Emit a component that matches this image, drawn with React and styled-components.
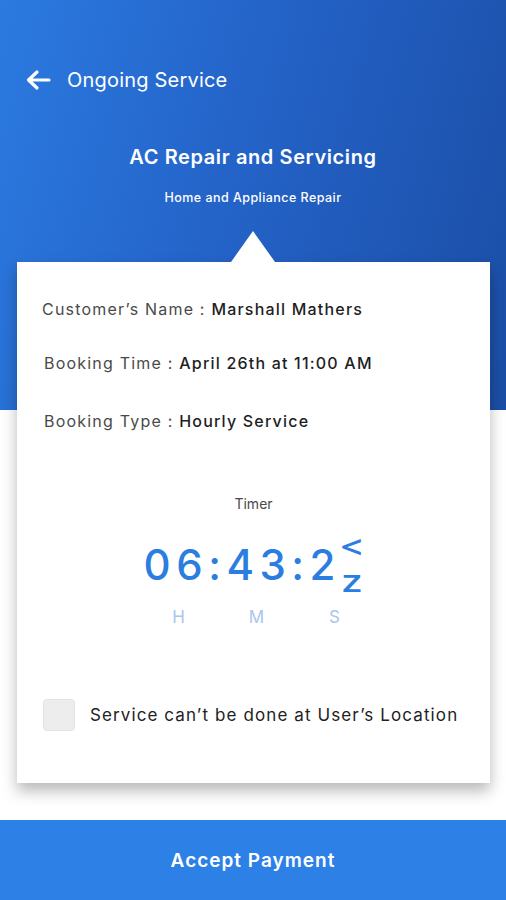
import styled, { createGlobalStyle } from "styled-components"

const GlobalStyle = createGlobalStyle`
  html, body {
    margin: 0;
    padding: 0;
    background: #ffffff;
    font-family: Inter, "Open Sans", "Liberation Sans", sans-serif;
  }
  * { box-sizing: border-box; }
`

export default function App() {
    const rows = [
        { label: "Customer’s Name", value: "Marshall Mathers", shift: -2 },
        { label: "Booking Time", value: "April 26th at 11:00 AM", shift: 0 },
        { label: "Booking Type", value: "Hourly Service", shift: 0 },
    ]
    return (
        <Page>
            <GlobalStyle />
            <Hero>
                <TopBar>
                    <BackButton aria-label="Back">
                        <svg width="26" height="22" viewBox="0 0 26 22" fill="none">
                            <path d="M24 11H4M12 3L3.5 11L12 19" stroke="#fff" strokeWidth="3.2" strokeLinecap="round" strokeLinejoin="round" />
                        </svg>
                    </BackButton>
                    <TopTitle>Ongoing Service</TopTitle>
                </TopBar>
                <ServiceTitle>AC Repair and Servicing</ServiceTitle>
                <ServiceSub>Home and Appliance Repair</ServiceSub>
            </Hero>

            <Card>
                <Details>
                    {rows.map((r, i) => (
                        <DetailRow key={r.label} $shift={r.shift} $gap={i === 0 ? 0 : i === 1 ? 34 : 38}>
                            <Label>{r.label} : </Label>
                            <Value>{r.value}</Value>
                        </DetailRow>
                    ))}
                </Details>

                <TimerBlock>
                    <TimerLabel>Timer</TimerLabel>
                    <Digits>
                        <span>06:43:2</span>
                        {/* last digit caught mid-flip */}
                        <Flip>&lt;<br />z</Flip>
                    </Digits>
                    <Units>
                        <span>H</span>
                        <span>M</span>
                        <span>S</span>
                    </Units>
                </TimerBlock>

                <CheckRow>
                    <CheckBox type="checkbox" />
                    <CheckText>Service can’t be done at User’s Location</CheckText>
                </CheckRow>
            </Card>

            <AcceptButton>Accept Payment</AcceptButton>
        </Page>
    )
}

const Page = styled.div`
display: flex;
flex-direction: column;
width: 506px;
height: 900px;
overflow: hidden;
`
const Hero = styled.header`
height: 410px;
flex-shrink: 0;
display: flex;
flex-direction: column;
align-items: center;
padding-top: 66px;
background: linear-gradient(105deg, #2b7ae0 0%, #2463c8 45%, #1b4ea6 100%);
color: #ffffff;
`
const TopBar = styled.div`
align-self: stretch;
display: flex;
align-items: center;
gap: 16px;
padding-left: 25px;
height: 28px;
`
const BackButton = styled.button`
background: none;
border: none;
padding: 0;
display: flex;
cursor: pointer;
`
const TopTitle = styled.h1`
margin: 0;
font-size: 20px;
font-weight: 400;
letter-spacing: 0.2px;
`
const ServiceTitle = styled.h2`
margin: 50px 0 0;
font-size: 20px;
font-weight: 600;
line-height: 26px;
letter-spacing: 0.6px;
`
const ServiceSub = styled.p`
margin: 20px 0 0;
font-size: 12.5px;
font-weight: 500;
line-height: 16px;
letter-spacing: 0.45px;
`
const Card = styled.section`
position: relative;
margin: -148px 16px 0 17px;
height: 521px;
flex-shrink: 0;
background: #ffffff;
box-shadow: 0 8px 14px rgba(0, 0, 0, 0.28);
padding: 37px 0 0 27px;
&::before {
    content: "";
    position: absolute;
    top: -31px;
    left: 214px;
    border-left: 22px solid transparent;
    border-right: 22px solid transparent;
    border-bottom: 31px solid #ffffff;
}
`
const Details = styled.div`
display: flex;
flex-direction: column;
`
const DetailRow = styled.div`
margin-top: ${p => p.$gap}px;
margin-left: ${p => p.$shift}px;
font-size: 16px;
line-height: 20px;
letter-spacing: 1.2px;
white-space: nowrap;
`
const Label = styled.span`
color: #4a4a4a;
font-weight: 400;
`
const Value = styled.span`
color: #1e1e1e;
font-weight: 500;
`
const TimerBlock = styled.div`
margin: 64px 0 0 -27px;
display: flex;
flex-direction: column;
align-items: center;
`
const TimerLabel = styled.div`
font-size: 14px;
color: #4a4a4a;
line-height: 18px;
`
const Digits = styled.div`
margin-top: 26px;
margin-left: 2px;
height: 52px;
display: flex;
align-items: center;
font-size: 42px;
font-weight: 500;
line-height: 52px;
color: #2b7de0;
letter-spacing: 5.5px;
& > span:first-child {
    margin-right: -5.5px;
}
`
const Flip = styled.span`
display: inline-block;
width: 26px;
margin: -10px 0 -10px 4px;
font-size: 30px;
line-height: 36px;
letter-spacing: 0;
text-align: center;
transform: scaleX(1.3) translateY(-2px);
`
const Units = styled.div`
margin-top: 16px;
margin-left: 6px;
display: grid;
grid-template-columns: repeat(3, 78px);
justify-items: center;
font-size: 17px;
color: #a9c6ee;
`
const CheckRow = styled.label`
margin-top: 72px;
display: flex;
align-items: center;
gap: 15px;
margin-left: -1px;
`
const CheckBox = styled.input`
appearance: none;
margin: 0;
width: 32px;
height: 32px;
border-radius: 4px;
background: #ededed;
border: 1px solid #e2e2e2;
`
const CheckText = styled.span`
font-size: 17px;
color: #222222;
letter-spacing: 1.1px;
`
const AcceptButton = styled.button`
margin-top: 37px;
height: 80px;
flex-shrink: 0;
border: none;
background: #2d80e6;
color: #ffffff;
font-family: inherit;
font-size: 19px;
font-weight: 600;
letter-spacing: 1px;
`
